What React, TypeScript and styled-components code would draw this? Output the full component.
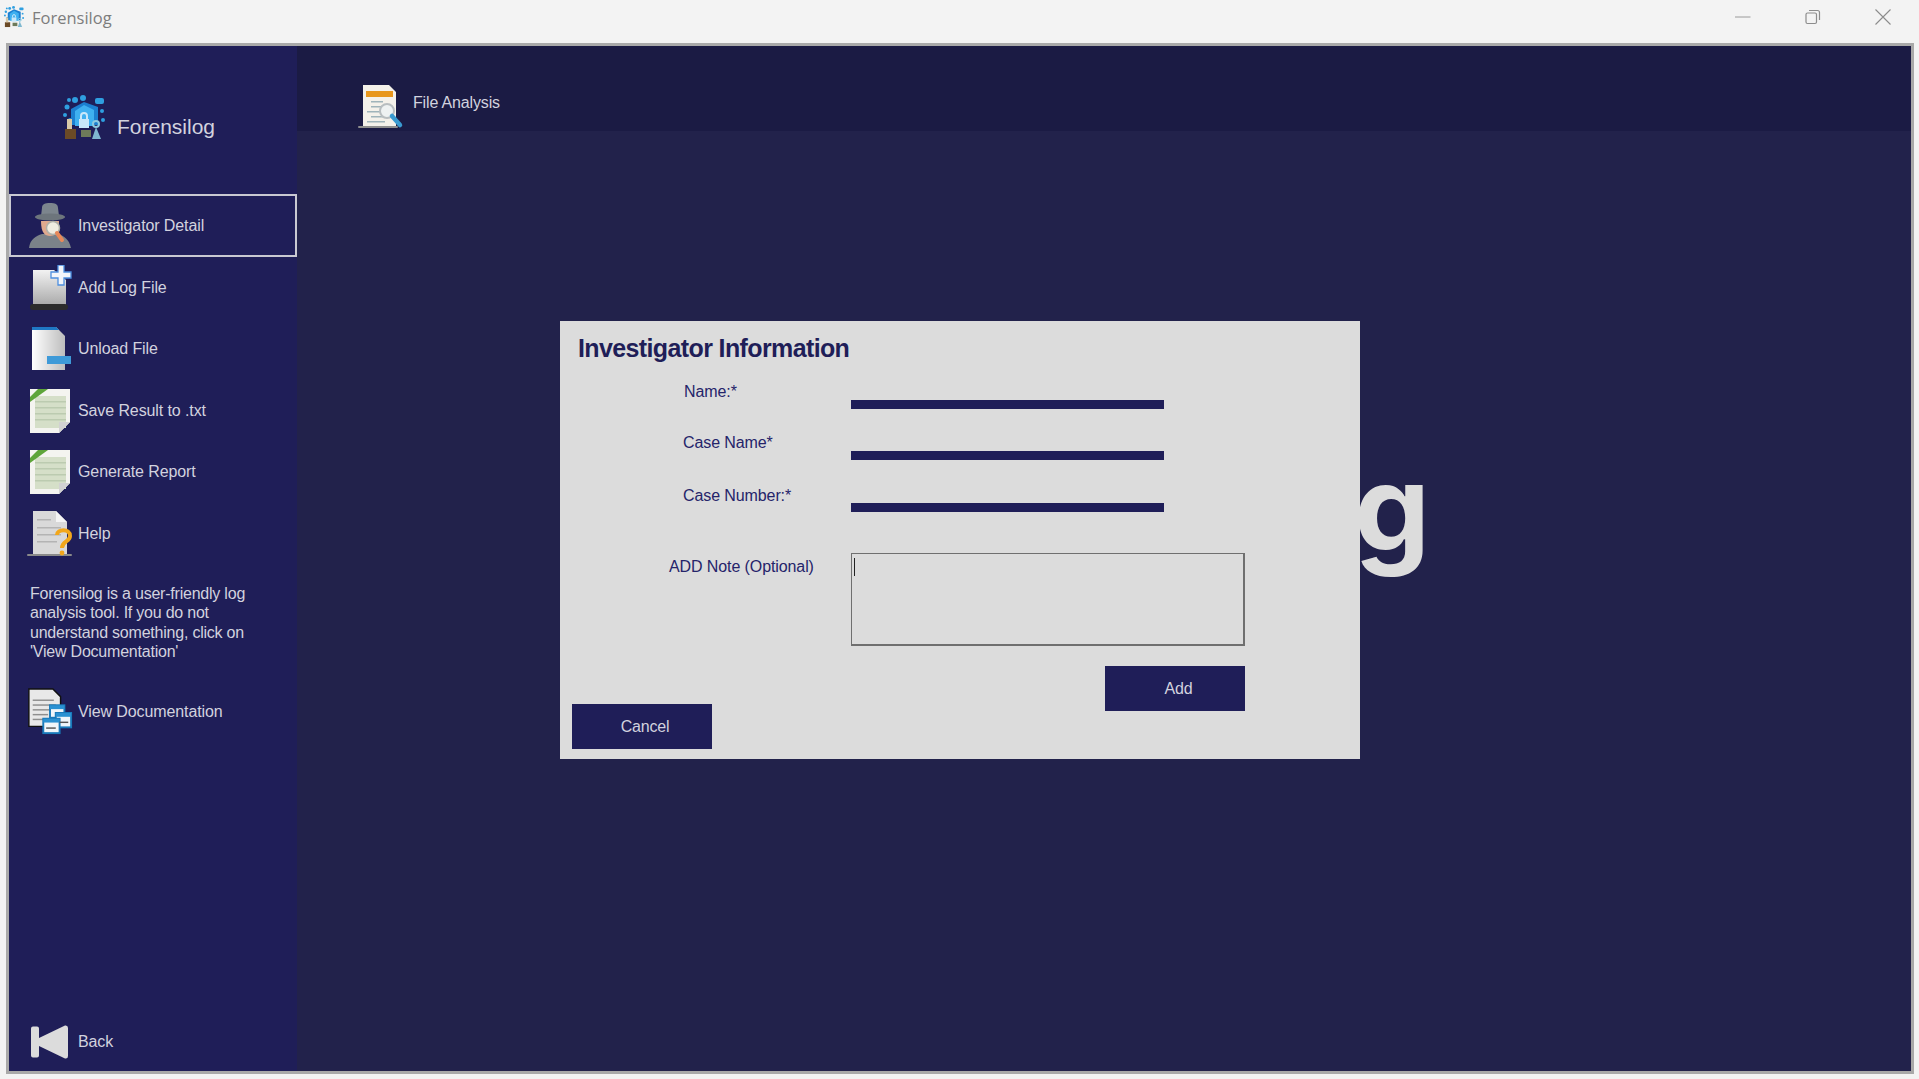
import styled, { createGlobalStyle } from "styled-components";

const GlobalStyle = createGlobalStyle`
  html, body {
    margin: 0;
    padding: 0;
    width: 100%;
    height: 100%;
    overflow: hidden;
    background: #f3f3f3;
  }
  * {
    box-sizing: border-box;
  }
`;

const Page = styled.div`
  width: 1919px;
  height: 1079px;
  display: flex;
  flex-direction: column;
  font-family: "Liberation Sans", Arial, sans-serif;
`;

const TitleBar = styled.div`
  height: 43px;
  flex: none;
  display: flex;
  align-items: center;
  padding: 0 28px 9px 3px;
  background: #f3f3f3;
`;

const TitleText = styled.span`
  margin-left: 7px;
  color: #7d7d7d;
  font-family: "Open Sans", sans-serif;
  font-size: 16.5px;
`;

const WindowButtons = styled.div`
  margin-left: auto;
  display: flex;
  gap: 54px;
`;

const Frame = styled.div`
  flex: none;
  height: 1031px;
  margin: 0 5px 0 6px;
  border: 3px solid #a9a9a9;
  display: flex;
  overflow: hidden;
`;

const Sidebar = styled.aside`
  width: 288px;
  flex: none;
  display: flex;
  flex-direction: column;
  background: #1f1e58;
  color: #d2d2df;
`;

const Brand = styled.div`
  height: 148px;
  flex: none;
  display: flex;
  align-items: flex-start;
  padding: 49px 0 0 52px;
`;

const BrandName = styled.span`
  margin: 20px 0 0 10px;
  font-size: 21px;
  color: #d2d2df;
`;

const NavItem = styled.div<{ $active?: boolean }>`
  height: ${(props) => (props.$active ? "63px" : "61.5px")};
  flex: none;
  display: flex;
  align-items: center;
  padding-left: ${(props) => (props.$active ? "15px" : "17px")};
  border: ${(props) => (props.$active ? "2px solid #c9c9d2" : "none")};
  font-size: 16px;
  letter-spacing: -0.1px;
`;

const IconSlot = styled.span`
  width: 52px;
  height: 50px;
  padding-right: 4px;
  flex: none;
  display: flex;
  align-items: center;
  justify-content: center;
`;

const Blurb = styled.p`
  margin: 19px 0 19px 21px;
  width: 240px;
  font-size: 16px;
  line-height: 19.6px;
  letter-spacing: -0.22px;
`;

const BackItem = styled(NavItem)`
  margin-top: auto;
  margin-bottom: 0;
  height: 58px;
  padding-bottom: 0;
`;

const Main = styled.main`
  flex: 1;
  position: relative;
  display: flex;
  flex-direction: column;
  background: #22224b;
`;

const TopBar = styled.div`
  height: 85px;
  flex: none;
  display: flex;
  align-items: flex-end;
  padding: 0 0 0 60px;
  background: #1b1b44;
  color: #d2d2df;
  font-size: 16px;
  letter-spacing: -0.15px;
`;

const TopLabel = styled.span`
  margin: 0 0 19px 8px;
`;

const Wordmark = styled.div`
  flex: 1;
  display: flex;
  justify-content: flex-end;
  padding: 317px 481px 0 0;
  color: #dcdcdc;
  font-family: Inter, "Liberation Sans", sans-serif;
  font-size: 120px;
  font-weight: 700;
  line-height: 1;
`;

const Dialog = styled.section`
  position: absolute;
  left: 263px;
  top: 275px;
  width: 800px;
  height: 438px;
  display: flex;
  flex-direction: column;
  padding: 11px 0 10px 0;
  background: #dcdcdc;
  color: #25246a;
`;

const DialogTitle = styled.h2`
  margin: 0 0 16px 18px;
  height: 32px;
  font-size: 25px;
  line-height: 33px;
  font-weight: 700;
  letter-spacing: -0.62px;
  color: #1f1e58;
`;

const Row = styled.div<{ $height: number }>`
  height: ${(props) => props.$height}px;
  flex: none;
  display: grid;
  grid-template-columns: 291px 1fr;
`;

const FieldLabel = styled.label<{ $indent: number; $top?: number }>`
  padding-left: ${(props) => props.$indent}px;
  padding-top: ${(props) => props.$top ?? 1}px;
  font-size: 16px;
  line-height: 22px;
  letter-spacing: -0.1px;
`;

const Bar = styled.div<{ $top: number }>`
  width: 313px;
  height: 9px;
  margin-top: ${(props) => props.$top}px;
  background: #1f1e58;
`;

const NoteBox = styled.div`
  width: 394px;
  height: 93px;
  padding: 4px 2px;
  border: 1px solid #6f6f6f;
  border-bottom-width: 2px;
  border-right-width: 2px;
`;

const Caret = styled.div`
  width: 1px;
  height: 18px;
  background: #222;
`;

const Actions = styled.div`
  flex: 1;
  display: flex;
  justify-content: space-between;
  padding: 0 115px 0 12px;
`;

const ActionButton = styled.button<{ $end?: boolean }>`
  width: 140px;
  height: 45px;
  align-self: ${(props) => (props.$end ? "flex-end" : "flex-start")};
  border: 0;
  background: #1f1e58;
  color: #d2d2df;
  font-family: inherit;
  font-size: 16px;
  letter-spacing: -0.2px;
  padding: 0 0 0 ${(props) => (props.$end ? "6px" : "7px")};
`;

const LogoIcon = ({ size = 46 }: { size?: number }) => (
  <svg width={size} height={size} viewBox="0 0 46 46">
    <g fill="#2f9fe0">
      <circle cx="6" cy="12" r="2.5" />
      <circle cx="4" cy="20" r="2" />
      <circle cx="9" cy="25" r="2" />
      <circle cx="14" cy="5" r="3" />
      <circle cx="22" cy="3" r="3" />
      <rect x="34" y="3" width="9" height="6" rx="2" />
      <circle cx="41" cy="16" r="2" />
      <circle cx="42" cy="25" r="2" />
      <circle cx="8" cy="5" r="2" />
    </g>
    <path d="M10 14 L23 7 L37 12 L37 30 L10 30 Z" fill="#1c7fd0" />
    <path d="M14 16 L23 10 L33 15 L33 31 L14 31 Z" fill="#3fb0f0" />
    <path d="M18 24 h10 v9 h-10 Z" fill="#c9e8fa" />
    <path d="M20 24 v-3 a3 3 0 0 1 6 0 v3" fill="none" stroke="#c9e8fa" strokeWidth="2" />
    <rect x="4" y="34" width="11" height="10" fill="#6b4a26" />
    <rect x="6" y="24" width="5" height="10" fill="#d9c9a8" />
    <rect x="20" y="35" width="10" height="7" fill="#6d7a5a" />
    <circle cx="35" cy="29" r="3" fill="none" stroke="#8cc8e0" strokeWidth="2" />
    <path d="M35 32 L31 44 H40 Z" fill="#7fb8d0" />
  </svg>
);

const DetectiveIcon = () => (
  <svg width="44" height="46" viewBox="0 0 44 46">
    <path d="M1 45 C2 36 8 33 14 31 L30 31 C36 33 41 36 43 45 Z" fill="#7b8289" />
    <path d="M13 18 C13 30 17 33 22 33 C27 33 31 30 31 18 Z" fill="#e0a98e" />
    <path d="M14 5 C14 1 17 0 22 0 C27 0 30 1 30 5 L31 13 L13 13 Z" fill="#7c858d" />
    <ellipse cx="22" cy="14" rx="15" ry="3.5" fill="#6d757c" />
    <circle cx="25" cy="25" r="6.5" fill="#f0ece0" stroke="#b0b0a8" strokeWidth="1.5" />
    <path d="M29 30 L34 37" stroke="#e8895a" strokeWidth="4" strokeLinecap="round" />
  </svg>
);

const AddFileIcon = () => (
  <svg width="44" height="46" viewBox="0 0 44 46">
    <defs>
      <linearGradient id="addf" x1="0" y1="0" x2="0" y2="1">
        <stop offset="0" stopColor="#f2f2f2" />
        <stop offset="1" stopColor="#a8a8a8" />
      </linearGradient>
    </defs>
    <path d="M5 5 H26 L38 15 V41 H5 Z" fill="url(#addf)" />
    <rect x="2" y="39" width="38" height="6" rx="3" fill="#2c2c2c" />
    <path d="M30 0 H36 V7 H43 V13 H36 V20 H30 V13 H23 V7 H30 Z" fill="#f2f5fa" stroke="#4d8fe0" strokeWidth="1.3" />
  </svg>
);

const UnloadFileIcon = () => (
  <svg width="44" height="46" viewBox="0 0 44 46">
    <defs>
      <linearGradient id="unf" x1="0" y1="0" x2="1" y2="0">
        <stop offset="0" stopColor="#ffffff" />
        <stop offset="1" stopColor="#bdbdbd" />
      </linearGradient>
    </defs>
    <path d="M4 1 H28 L37 10 V44 H4 Z" fill="url(#unf)" />
    <path d="M4 1 H28 L31 4 H4 Z" fill="#1f78c4" />
    <rect x="19" y="30" width="24" height="8" fill="#3e9ad8" />
  </svg>
);

const TxtFileIcon = () => (
  <svg width="44" height="46" viewBox="0 0 44 46">
    <path d="M2 1 H42 V34 L31 45 H2 Z" fill="#f4f4f0" />
    <path d="M31 45 V34 H42 Z" fill="#c8c8c8" />
    <rect x="7" y="8" width="31" height="32" fill="#d5dfc8" />
    <g fill="#bccbb0">
      <rect x="7" y="13" width="31" height="1.5" />
      <rect x="7" y="19" width="31" height="1.5" />
      <rect x="7" y="25" width="31" height="1.5" />
      <rect x="7" y="31" width="31" height="1.5" />
    </g>
    <path d="M31 45 V34 H42 Z" fill="#d2d2d2" />
    <path d="M2 14 V9 L10 1 H20 Z" fill="#5ea53a" />
  </svg>
);

const HelpFileIcon = () => (
  <svg width="48" height="48" viewBox="0 0 48 48">
    <path d="M7 1 H30 L41 12 V44 H7 Z" fill="#d9d9d9" />
    <path d="M30 1 V12 H41 Z" fill="#f4f4f4" />
    <g fill="#b4b4b4">
      <rect x="11" y="9" width="14" height="1.5" />
      <rect x="11" y="17" width="24" height="1.5" />
      <rect x="11" y="24" width="24" height="1.5" />
      <rect x="11" y="31" width="20" height="1.5" />
    </g>
    <rect x="1" y="44" width="45" height="2" rx="1" fill="#8a8a8a" />
    <path d="M31 25 C31 19 44 18 44 26 C44 32 36 31 36 38" fill="none" stroke="#f2a71c" strokeWidth="4" />
    <circle cx="36" cy="43" r="2.4" fill="#f2a71c" />
  </svg>
);

const DocsIcon = () => (
  <svg width="50" height="50" viewBox="0 0 50 50">
    <path d="M3 1 H28 L36 9 V40 H3 Z" fill="#e8e8e8" stroke="#111" strokeWidth="1.5" />
    <g fill="#8e8e8e">
      <rect x="7" y="12" width="22" height="1.5" />
      <rect x="7" y="17" width="24" height="1.5" />
      <rect x="7" y="22" width="17" height="1.5" />
      <rect x="7" y="27" width="16" height="1.5" />
      <rect x="7" y="32" width="15" height="1.5" />
    </g>
    <rect x="25" y="18" width="15" height="13" fill="#f0f6fa" stroke="#1879b9" strokeWidth="2" />
    <rect x="31" y="26" width="16" height="15" fill="#f0f6fa" stroke="#1879b9" strokeWidth="2" />
    <rect x="18" y="32" width="17" height="15" fill="#f0f6fa" stroke="#1879b9" strokeWidth="2" />
    <rect x="31" y="26" width="16" height="4" fill="#2a91d2" />
    <rect x="18" y="32" width="17" height="4" fill="#2a91d2" />
    <rect x="25" y="18" width="15" height="4" fill="#2a91d2" />
    <rect x="21" y="41" width="10" height="1.5" fill="#555" />
    <rect x="35" y="35" width="9" height="1.5" fill="#555" />
  </svg>
);

const BackIcon = () => (
  <svg width="38" height="34" viewBox="0 0 38 34">
    <path
      d="M2 1.5 H6 Q8 1.5 8 3.5 V13 L34 0.5 Q37 0 37 3 V31 Q37 34 34 33.5 L8 21 V30.5 Q8 32.5 6 32.5 H2 Q0 32.5 0 30.5 V3.5 Q0 1.5 2 1.5 Z"
      fill="#dcdcdc"
    />
  </svg>
);

const AnalysisIcon = () => (
  <svg width="48" height="48" viewBox="0 0 48 48">
    <path d="M6 2 H32 L39 9 V43 H6 Z" fill="#f4f1ea" />
    <rect x="9" y="8" width="27" height="6" fill="#e8971c" />
    <g fill="#9fb4ba">
      <rect x="14" y="18" width="12" height="1.5" />
      <rect x="14" y="23" width="10" height="1.5" />
      <rect x="10" y="28" width="14" height="1.5" />
      <rect x="14" y="33" width="15" height="1.5" />
      <rect x="10" y="38" width="18" height="1.5" />
    </g>
    <rect x="1" y="43" width="40" height="2" rx="1" fill="#8e8e8e" />
    <circle cx="30" cy="28" r="7" fill="#eef2f2" stroke="#b8bec0" strokeWidth="2" />
    <path d="M35 33 L43 42" stroke="#3a9ad0" strokeWidth="4.5" strokeLinecap="round" />
  </svg>
);

const MinimizeIcon = () => (
  <svg width="16" height="16" viewBox="0 0 16 16">
    <path d="M0 8 H15.5" stroke="#9a9a9a" strokeWidth="1" />
  </svg>
);

const RestoreIcon = () => (
  <svg width="16" height="16" viewBox="0 0 16 16" fill="none" stroke="#8c8c8c" strokeWidth="1.2">
    <rect x="1" y="4" width="10.5" height="10.5" rx="1.5" />
    <path d="M4 1.5 H12.5 Q14.5 1.5 14.5 3.5 V11" />
  </svg>
);

const CloseIcon = () => (
  <svg width="16" height="16" viewBox="0 0 16 16">
    <path d="M0.5 0.5 L15.5 15.5 M15.5 0.5 L0.5 15.5" stroke="#8c8c8c" strokeWidth="1.1" />
  </svg>
);

const navItems = [
  { label: "Investigator Detail", icon: <DetectiveIcon />, active: true },
  { label: "Add Log File", icon: <AddFileIcon /> },
  { label: "Unload File", icon: <UnloadFileIcon /> },
  { label: "Save Result to .txt", icon: <TxtFileIcon /> },
  { label: "Generate Report", icon: <TxtFileIcon /> },
  { label: "Help", icon: <HelpFileIcon /> },
];

const App = () => {
  return (
    <Page>
      <GlobalStyle />
      <TitleBar>
        <LogoIcon size={22} />
        <TitleText>Forensilog</TitleText>
        <WindowButtons>
          <MinimizeIcon />
          <RestoreIcon />
          <CloseIcon />
        </WindowButtons>
      </TitleBar>
      <Frame>
        <Sidebar>
          <Brand>
            <LogoIcon />
            <BrandName>Forensilog</BrandName>
          </Brand>
          {navItems.map((item) => (
            <NavItem key={item.label} $active={item.active}>
              <IconSlot>{item.icon}</IconSlot>
              {item.label}
            </NavItem>
          ))}
          <Blurb>
            Forensilog is a user-friendly log analysis tool. If you do not understand something, click on
            'View Documentation'
          </Blurb>
          <NavItem>
            <IconSlot>
              <DocsIcon />
            </IconSlot>
            View Documentation
          </NavItem>
          <BackItem>
            <IconSlot>
              <BackIcon />
            </IconSlot>
            Back
          </BackItem>
        </Sidebar>
        <Main>
          <TopBar>
            <AnalysisIcon />
            <TopLabel>File Analysis</TopLabel>
          </TopBar>
          <Wordmark>Forensilog</Wordmark>
          <Dialog>
            <DialogTitle>Investigator Information</DialogTitle>
            <Row $height={51}>
              <FieldLabel $indent={124}>Name:*</FieldLabel>
              <Bar $top={20} />
            </Row>
            <Row $height={53}>
              <FieldLabel $indent={123}>Case Name*</FieldLabel>
              <Bar $top={20} />
            </Row>
            <Row $height={69}>
              <FieldLabel $indent={123}>Case Number:*</FieldLabel>
              <Bar $top={19} />
            </Row>
            <Row $height={113}>
              <FieldLabel $indent={109} $top={3}>
                ADD Note (Optional)
              </FieldLabel>
              <NoteBox>
                <Caret />
              </NoteBox>
            </Row>
            <Actions>
              <ActionButton $end>Cancel</ActionButton>
              <ActionButton>Add</ActionButton>
            </Actions>
          </Dialog>
        </Main>
      </Frame>
    </Page>
  );
};

export default App;
